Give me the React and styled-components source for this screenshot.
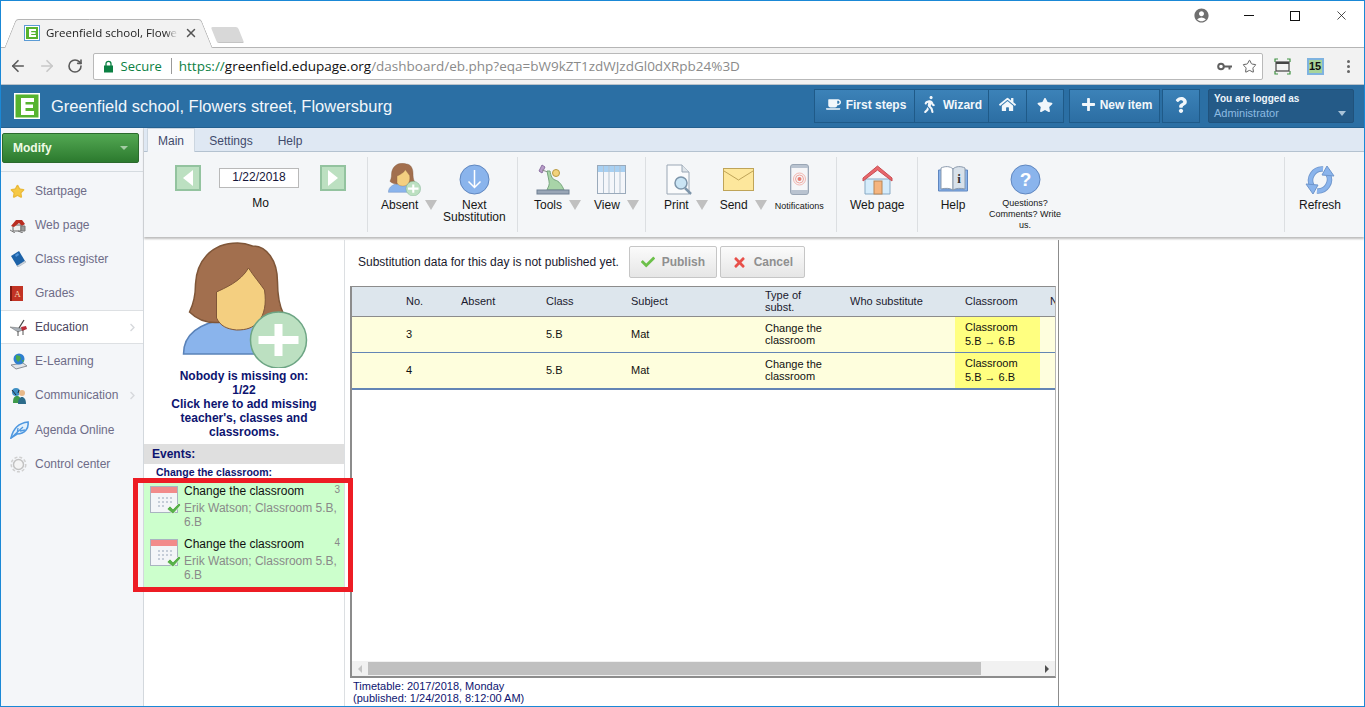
import React from 'react';
import styled, { createGlobalStyle } from 'styled-components';
import { ArrowLeft, ArrowRight, RotateCw, Star, X } from 'lucide-react';
import { FaCoffee, FaWalking, FaHome, FaStar, FaPlus, FaQuestion, FaCheck, FaTimes, FaChevronRight } from 'react-icons/fa';
import { MdAccountCircle } from 'react-icons/md';

const GlobalStyle = createGlobalStyle`
  html, body { margin: 0; padding: 0; background: #fff; overflow: hidden; }
  * { box-sizing: border-box; }
  body { font-family: "Liberation Sans", Arial, sans-serif; }
`;

const Page = styled.div`
  width: 1365px;
  height: 707px;
  border: 1px solid #1a88d6;
  display: flex;
  flex-direction: column;
  overflow: hidden;
  background: #fff;
`;

/* browser chrome */
const TabStrip = styled.div`
  height: 46px;
  flex: none;
  display: flex;
  align-items: flex-start;
  background: #fff;
  padding-left: 15px;
`;
const Tab = styled.div`
  position: relative;
  width: 185px;
  height: 28px;
  margin-top: 18px;
  display: flex;
  align-items: center;
  padding: 0 0 1px 8px;
  font: 11.5px "Open Sans", sans-serif;
  color: #222;
  z-index: 1;
  &::before, &::after {
    content: '';
    position: absolute;
    top: 0;
    bottom: -1px;
    width: 60%;
    background: #f2f2f2;
    border-top: 1px solid #b5b5b5;
    z-index: -1;
  }
  &::before { left: -6px; transform: skewX(-22deg); border-left: 1px solid #b5b5b5; border-radius: 3px 0 0 0; }
  &::after { right: -6px; transform: skewX(22deg); border-right: 1px solid #b5b5b5; border-radius: 0 3px 0 0; }
`;
const TabTitle = styled.span`
  width: 132px;
  margin-left: 6px;
  white-space: nowrap;
  -webkit-mask-image: linear-gradient(to right, #000 90%, transparent);
  mask-image: linear-gradient(to right, #000 90%, transparent);
`;
const TabClose = styled(X)`
  margin-left: 6px;
  color: #555;
`;
const NewTab = styled.div`
  width: 27px;
  height: 16px;
  margin: 26px 0 0 13px;
  background: #d8d8d8;
  border-bottom: 1px solid #c4c4c4;
  border-radius: 2px;
  transform: skewX(22deg);
`;
const WindowControls = styled.div`
  margin-left: auto;
  display: flex;
  align-items: center;
  height: 29px;
`;
const WindowButton = styled.div`
  width: 46px;
  height: 29px;
  display: flex;
  align-items: center;
  justify-content: center;
`;
const ProfileIcon = styled(MdAccountCircle)`
  color: #6f6f6f;
  margin-right: 16px;
`;
const MinLine = styled.span`
  width: 10px;
  height: 1px;
  background: #111;
`;
const MaxBox = styled.span`
  width: 10px;
  height: 10px;
  border: 1px solid #111;
`;

const Toolbar = styled.div`
  height: 38px;
  flex: none;
  display: flex;
  align-items: center;
  background: #f2f2f2;
  border-top: 1px solid #b5b5b5;
  border-bottom: 1px solid #b9c2ca;
  padding: 0 0 0 3px;
`;
const NavButton = styled.div`
  width: 28.5px;
  display: flex;
  justify-content: center;
  color: ${p => p.$off ? '#c8c8c8' : '#5a5a5a'};
`;
const Omnibox = styled.div`
  width: 1170px;
  height: 27px;
  margin-left: 3px;
  display: flex;
  align-items: center;
  background: #fff;
  border: 1px solid #b9b9b9;
  border-radius: 2px;
  padding: 0 5px 0 9px;
  font: 13.5px "Open Sans", sans-serif;
  white-space: nowrap;
`;
const Secure = styled.span`
  color: #0b8043;
  margin-left: 7px;
  font-size: 13px;
`;
const UrlDivider = styled.span`
  width: 1px;
  height: 16px;
  background: #9a9a9a;
  margin: 0 7px 0 9px;
`;
const UrlGreen = styled.span`color: #0b8043;`;
const UrlHost = styled.span`color: #111;`;
const UrlPath = styled.span`color: #8a8a8a;`;
const OmniIcons = styled.div`
  margin-left: auto;
  display: flex;
  align-items: center;
  gap: 10px;
  color: #5f5f5f;
`;
const ExtArea = styled.div`
  flex: 1;
  display: flex;
  align-items: center;
  padding-left: 11px;
`;
const CalBadge = styled.div`
  width: 17px;
  height: 17px;
  margin-left: 16px;
  background: #a8d49a;
  border: 2px solid #7fb3e0;
  font: bold 11px/13px "Liberation Sans", sans-serif;
  text-align: center;
  color: #111;
`;
const MenuDots = styled.div`
  margin-left: 23px;
  display: flex;
  flex-direction: column;
  gap: 2px;
  span { width: 3px; height: 3px; border-radius: 50%; background: #666; }
`;

/* app header */
const AppHeader = styled.header`
  height: 43px;
  flex: none;
  display: flex;
  align-items: center;
  background: #2b6fa4;
  border-bottom: 1px solid #24608f;
  padding: 0 10px 0 13px;
`;
const SchoolName = styled.h1`
  margin: 0 0 0 11px;
  font: normal 16.5px "Liberation Sans", sans-serif;
  color: #f2f7fb;
`;
const HeaderButtons = styled.div`
  margin-left: auto;
  display: flex;
  align-items: stretch;
  height: 34px;
`;
const HeadBtn = styled.div`
  width: ${p => p.$w}px;
  margin-left: ${p => p.$ml || 0}px;
  display: flex;
  align-items: center;
  justify-content: center;
  gap: ${p => p.$gap || 5}px;
  padding-bottom: 3px;
  padding-left: ${p => p.$pl || 0}px;
  background: linear-gradient(#3c82b8, #2c6ea3);
  border: 1px solid #1f5a88;
  margin-right: -1px;
  font: bold 12px "Liberation Sans", sans-serif;
  color: #f2f7fb;
`;
const UserBox = styled.div`
  position: relative;
  width: 146px;
  margin-left: 9px;
  padding: 2px 5px;
  background: #245a87;
  border: 1px solid #20527c;
  border-radius: 2px;
  font: 11px/14px "Liberation Sans", sans-serif;
  color: #8dbbe2;
  b { display: block; color: #eef5fb; font-size: 10px; }
`;
const UserCaret = styled.span`
  position: absolute;
  right: 7px;
  bottom: 6px;
  border: 4px solid transparent;
  border-top: 5px solid #a9c3d8;
  border-bottom: 0;
`;

/* page body */
const Body = styled.div`
  flex: 1;
  display: flex;
  min-height: 0;
`;
const Sidebar = styled.aside`
  width: 143px;
  flex: none;
  background: #f4f6f9;
  border-right: 1px solid #d3d8dd;
  padding-top: 5px;
`;
const ModifyButton = styled.div`
  height: 30px;
  margin: 0 4px 0 1px;
  display: flex;
  align-items: center;
  justify-content: space-between;
  padding: 0 10px 0 10px;
  background: linear-gradient(#53a853, #2c7a2e);
  border: 1px solid #2b6a2d;
  border-radius: 2px;
  font: bold 12px "Liberation Sans", sans-serif;
  color: #eefbe4;
`;
const ModifyCaret = styled.span`
  border: 4px solid transparent;
  border-top: 4px solid #a4cca4;
  border-bottom: 0;
`;
const SideDivider = styled.div`
  height: 1px;
  margin: 8px 0 2px;
  background: #d5dbe0;
`;
const SideItem = styled.div`
  height: 34px;
  margin-top: ${p => p.$push ? 1 : 0}px;
  display: flex;
  align-items: center;
  padding-left: 9px;
  background: ${p => p.$active ? '#fff' : 'transparent'};
  border-top: 1px solid ${p => p.$active ? '#dde0e3' : 'transparent'};
  border-bottom: 1px solid ${p => p.$active ? '#dde0e3' : 'transparent'};
  font: 12px "Liberation Sans", sans-serif;
  color: ${p => p.$active ? '#4b4660' : '#6e6c88'};
`;
const SideIcon = styled.span`
  width: 25px;
  height: 20px;
  flex: none;
  display: flex;
  align-items: center;
`;
const SideChevron = styled(FaChevronRight)`
  margin-left: auto;
  margin-right: 6px;
  color: #d6d8dc;
`;

const MainArea = styled.div`
  flex: 1;
  min-width: 0;
  display: flex;
  flex-direction: column;
`;

/* ribbon */
const Ribbon = styled.div`
  flex: none;
  box-shadow: 0 2px 2px #bdbdbd;
  position: relative;
  z-index: 1;
`;
const RibbonTabs = styled.div`
  height: 24px;
  display: flex;
  padding-left: 3px;
  background: #dfe8f3;
  border-bottom: 1px solid #b4c2d0;
  font: 12px "Liberation Sans", sans-serif;
  color: #3f4a6b;
`;
const RibbonTab = styled.div`
  height: 24px;
  width: ${p => p.$w}px;
  display: flex;
  align-items: center;
  justify-content: center;
  background: ${p => p.$active ? '#f4f6f9' : 'transparent'};
  border: 1px solid ${p => p.$active ? '#ccd6e0' : 'transparent'};
  border-bottom: 0;
`;
const RibbonBody = styled.div`
  height: 85px;
  display: flex;
  padding-top: 5px;
  background: #f4f6f8;
`;
const Group = styled.div`
  height: 75px;
  width: ${p => p.$w ? p.$w + 'px' : 'auto'};
  display: flex;
  align-items: flex-start;
  gap: ${p => p.$gap || 0}px;
  padding-left: ${p => p.$pl || 0}px;
  margin-left: ${p => p.$auto ? 'auto' : 0};
  border-right: ${p => p.$last ? 0 : '1px solid #dcdfe2'};
  border-left: ${p => p.$auto ? '1px solid #dcdfe2' : 0};
`;
const DateGroup = styled(Group)`
  flex-direction: column;
  align-items: stretch;
`;
const DateRow = styled.div`
  display: flex;
  align-items: center;
  margin-top: 8px;
`;
const StepButton = styled.div`
  width: 26px;
  height: 26px;
  display: flex;
  align-items: center;
  justify-content: center;
  background: #bce0c1;
  border: 2px solid #93c39f;
  &::before {
    content: '';
    border: 8px solid transparent;
    border-left: ${p => p.$right ? '10px solid #fff' : 0};
    border-right: ${p => p.$right ? 0 : '10px solid #fff'};
  }
`;
const DateField = styled.div`
  width: 80px;
  height: 20px;
  margin: 0 21px 0 18px;
  background: #fff;
  border: 1px solid #b9b9b9;
  font: 12px/17px "Liberation Sans", sans-serif;
  text-align: center;
  color: #15153a;
`;
const DayName = styled.div`
  width: 171px;
  margin-top: 5px;
  font: 12px/14px "Liberation Sans", sans-serif;
  text-align: center;
  color: #111;
`;
const Tool = styled.div`
  width: ${p => p.$w ? p.$w + 'px' : 'auto'};
  margin-left: ${p => p.$ml || 0}px;
  display: flex;
  flex-direction: column;
  align-items: center;
  padding-top: 6px;
`;
const ToolIcon = styled.div`
  height: 33px;
  display: flex;
  align-items: center;
  justify-content: center;
  margin-right: ${p => p.$menu ? 10 : 0}px;
`;
const ToolLabel = styled.div`
  margin-top: ${p => p.$mt ?? 3}px;
  display: flex;
  align-items: flex-start;
  gap: 7px;
  font: ${p => p.$small ? '9px/11px' : '12px/12px'} "Liberation Sans", sans-serif;
  text-align: center;
  color: #161616;
`;
const MenuCaret = styled.span`
  margin-top: 1px;
  border: 6px solid transparent;
  border-top: 10px solid #c0c0c0;
  border-bottom: 0;
`;

/* content */
const Content = styled.div`
  flex: 1;
  min-height: 0;
  display: flex;
  padding-top: 3px;
`;
const MissingPanel = styled.section`
  width: 201px;
  flex: none;
  border-right: 1px solid #dcdfe2;
  display: flex;
  flex-direction: column;
`;
const MissingInfo = styled.div`
  height: 204px;
  display: flex;
  flex-direction: column;
  align-items: center;
  padding: 2px 20px 0;
  font: bold 12px/14px "Liberation Sans", sans-serif;
  color: #0d1470;
  text-align: center;
  svg { margin-left: 2px; }
  p { margin: 1px 0 0; }
`;
const EventsHead = styled.div`
  height: 20px;
  padding-left: 8px;
  background: #dfdfdf;
  font: bold 12px/20px "Liberation Sans", sans-serif;
  color: #0d1470;
`;
const EventsCaption = styled.div`
  height: 19px;
  padding: 2px 0 0 12px;
  font: bold 10.5px/12px "Liberation Sans", sans-serif;
  color: #0d1470;
`;
const EventList = styled.div`
  position: relative;
  height: 104px;
  background: #ccffcc;
`;
const RedFrame = styled.div`
  position: absolute;
  top: -5px;
  left: -11px;
  right: -9px;
  bottom: -5px;
  border: 5px solid #ed1c24;
  pointer-events: none;
`;
const EventRow = styled.div`
  position: relative;
  height: 53px;
  display: flex;
  padding: 1px 4px 0 6px;
`;
const EventIcon = styled.div`
  width: 34px;
  flex: none;
  padding-top: 2px;
`;
const EventText = styled.div`
  flex: 1;
  font: 12px/14px "Liberation Sans", sans-serif;
  color: #111;
  small { display: block; margin-top: 3px; font-size: 12px; color: #8a8a8a; }
`;
const EventNo = styled.div`
  position: absolute;
  top: 1px;
  right: 4px;
  font: 10px/12px "Liberation Sans", sans-serif;
  color: #888;
`;

const SubPanel = styled.section`
  width: 714px;
  flex: none;
  border-right: 1px solid #8c8c8c;
  padding-left: 5px;
  display: flex;
  flex-direction: column;
`;
const Notice = styled.div`
  height: 46px;
  flex: none;
  display: flex;
  align-items: center;
  padding: 0 0 2px 8px;
  font: 12px "Liberation Sans", sans-serif;
  color: #1a1a2e;
`;
const ActionButton = styled.div`
  width: ${p => p.$w}px;
  height: 32px;
  margin-left: ${p => p.$ml}px;
  display: flex;
  align-items: center;
  justify-content: center;
  gap: 7px;
  background: linear-gradient(#fbfbfb, #e6e6e6);
  border: 1px solid #c6c6c6;
  border-radius: 2px;
  font: bold 12px "Liberation Sans", sans-serif;
  color: #8f8f8f;
`;
const Frame = styled.div`
  width: 706px;
  height: 392px;
  flex: none;
  display: flex;
  flex-direction: column;
  border-top: 1px solid #8c8c8c;
  border-bottom: 2px solid #8c8c8c;
  border-left: 2px solid #8c8c8c;
  border-right: 1px solid #b5b5b5;
`;
const GridWrap = styled.div`
  flex: 1;
  overflow: hidden;
`;
const columns = '44px 55px 85px 85px 134px 85px 115px 85px 20px';
const HeadRow = styled.div`
  height: 30px;
  display: grid;
  grid-template-columns: ${columns};
  align-items: center;
  background: #dde6ed;
  border-bottom: 1px solid #8c8c8c;
  font: 11px/12px "Liberation Sans", sans-serif;
  color: #1a1a2e;
`;
const Row = styled.div`
  height: ${p => p.$h}px;
  display: grid;
  grid-template-columns: ${columns};
  align-items: center;
  background: #fefedd;
  border-bottom: ${p => p.$last ? '2px solid #6385b5' : '1px solid #6385b5'};
  font: 11px/12px "Liberation Sans", sans-serif;
  color: #111;
`;
const Cell = styled.div`
  padding: 0 0 2px 10px;
  overflow: hidden;
  white-space: ${p => p.$clip ? 'nowrap' : 'normal'};
`;
const ChangeCell = styled(Cell)`
  align-self: stretch;
  display: flex;
  flex-direction: column;
  justify-content: center;
  background: #ffff80;
  line-height: 14px;
`;
const Scrollbar = styled.div`
  height: 15px;
  flex: none;
  display: flex;
  align-items: center;
  background: #f1f1f1;
`;
const ScrollArrow = styled.span`
  width: 16px;
  display: flex;
  justify-content: center;
  &::before {
    content: '';
    border: 4px solid transparent;
    border-left: ${p => p.$right ? '4px solid #505050' : 0};
    border-right: ${p => p.$right ? 0 : '4px solid #c4c4c4'};
  }
`;
const ScrollThumb = styled.div`
  width: 613px;
  height: 13px;
  background: #c0c0c0;
`;
const ScrollRest = styled.div`flex: 1;`;
const Published = styled.div`
  padding: 2px 0 0 3px;
  font: 11px/12px "Liberation Sans", sans-serif;
  color: #0d1470;
`;

/* drawings */
const Logo = ({ size }) => (
  <svg width={size} height={size} viewBox="0 0 26 26">
    <rect width="26" height="26" fill="#fff" />
    <rect x="1.500" y="1.500" width="23" height="23" fill="#56b32f" />
    <path d="M7 5h13v4h-8.500v2.500H19v3.500h-7.500V18H20v4H7z" fill="#fff" />
  </svg>
);
const Favicon = () => (
  <svg width="16" height="16" viewBox="0 0 16 16">
    <rect x="0.500" y="0.500" width="15" height="15" fill="#fff" stroke="#5b9bd5" />
    <rect x="2" y="2" width="12" height="12" fill="#56b32f" />
    <path d="M5 4h7v2H7.200v1.200H11.500v1.800H7.200v1.100H12v2H5z" fill="#fff" />
  </svg>
);
const Padlock = () => (
  <svg width="11" height="13" viewBox="0 0 11 13">
    <path d="M3 6V3.800a2.500 2.500 0 0 1 5 0V6" fill="none" stroke="#0b8043" strokeWidth="1.300" />
    <rect x="1" y="5.500" width="9" height="7" fill="#0b8043" />
  </svg>
);
const KeyIcon = () => (
  <svg width="15" height="9" viewBox="0 0 15 9">
    <circle cx="4" cy="4.500" r="2.800" fill="none" stroke="#5f5f5f" strokeWidth="2" />
    <path d="M7 3.500h8v2h-1.500v2h-2v-2H7z" fill="#5f5f5f" />
  </svg>
);
const CastFrame = () => (
  <svg width="17" height="17" viewBox="0 0 17 17">
    <path d="M1 4V1h3M13 1h3v3M1 13v3h3M13 16h3v-3" fill="none" stroke="#3f9142" strokeWidth="1.200" />
    <rect x="2" y="4" width="13" height="9" fill="none" stroke="#444" strokeWidth="1.200" />
    <rect x="2" y="4" width="13" height="2" fill="#444" />
  </svg>
);
const PersonAdd = ({ size }) => (
  <svg width={size} height={size} viewBox="0 0 125 126">
    <path d="M1 112c0-24 22-32 44-35h22c14 2 26 6 32 12v23z" fill="#8ab4ec" stroke="#5a82b8" strokeWidth="1.500" />
    <path d="M40 66h30v12c-2 9-28 9-30 0z" fill="#dcb36f" stroke="#a98648" strokeWidth="1" />
    <path d="M55 1C28 1 14 20 13 42c0 14-3 22-6 28 8 8 20 12 33 10h30c12 2 24-2 31-8-5-10-6-20-6-32C95 18 84 4 70 4c-5-2-10-3-15-3z" fill="#a26f4e" stroke="#7f5638" strokeWidth="1.500" />
    <path d="M34 50c8-4 24-10 32-24 5 8 12 16 16 22 2 14 0 24-6 32-6 6-12 8-22 8-10-1-16-4-20-12z" fill="#f4cf80" stroke="#7f5638" strokeWidth="1" />
    <circle cx="96" cy="98" r="28" fill="#bce0c1" stroke="#6da584" strokeWidth="1.500" />
    <path d="M92 82h8v12h16v8h-16v12h-8v-12H76v-8h16z" fill="#fff" />
  </svg>
);
const CircleGlyph = ({ children }) => (
  <svg width="31" height="31" viewBox="0 0 31 31">
    <circle cx="15.500" cy="15.500" r="14.500" fill="#8ab4ec" stroke="#5f86bf" />
    {children}
  </svg>
);
const ToolsIcon = () => (
  <svg width="34" height="32" viewBox="0 0 34 32">
    <path d="M3 7l3-6 3 2-3 6z" fill="#b79ac8" stroke="#8d72a2" />
    <path d="M6 6l6 2 1-1" fill="none" stroke="#8a8a8a" />
    <circle cx="20" cy="9" r="3.500" fill="#f2d27c" stroke="#b89a45" />
    <path d="M11 7h3c1 5 2 8 5 9 4 1 7 5 9 10H11c1-3 3-5 2-9z" fill="#a8d4a8" stroke="#76a67d" />
    <rect x="1" y="26" width="32" height="4" fill="#99a6b6" stroke="#6e7f92" />
  </svg>
);
const ViewIcon = () => (
  <svg width="29" height="29" viewBox="0 0 29 29">
    <rect x="0.500" y="0.500" width="28" height="28" fill="#f4f6fa" stroke="#9aaabb" />
    <rect x="1" y="1" width="27" height="6" fill="#a8d0f2" />
    <path d="M6.500 1v27M12 1v27M17.500 1v27M23 1v27" stroke="#b5c3d0" />
  </svg>
);
const PrintIcon = () => (
  <svg width="29" height="32" viewBox="0 0 29 32">
    <path d="M1 1h15l7 7v22H1z" fill="#fafbfc" stroke="#9aa7b5" />
    <path d="M16 1v7h7" fill="#dfe5ea" stroke="#9aa7b5" />
    <circle cx="15" cy="19" r="6" fill="#c9e4f4" stroke="#7d95aa" strokeWidth="1.500" />
    <path d="M19 24l6 6" stroke="#7d95aa" strokeWidth="2.500" />
  </svg>
);
const MailIcon = () => (
  <svg width="31" height="23" viewBox="0 0 31 23">
    <rect x="0.500" y="0.500" width="30" height="22" fill="#fde79c" stroke="#bfa458" />
    <path d="M1 3l14.500 9L30 3" fill="none" stroke="#bfa458" />
  </svg>
);
const PhoneIcon = () => (
  <svg width="19" height="31" viewBox="0 0 19 31">
    <rect x="0.500" y="0.500" width="18" height="30" rx="2.500" fill="#b9c3d0" stroke="#9aa6b5" />
    <rect x="1.500" y="4" width="16" height="22" fill="#f6f6f8" />
    <circle cx="9.500" cy="15" r="6" fill="none" stroke="#f2b6b0" />
    <circle cx="9.500" cy="15" r="4" fill="none" stroke="#eda49c" />
    <circle cx="9.500" cy="15" r="2" fill="#e57e74" />
  </svg>
);
const HouseIcon = () => (
  <svg width="31" height="31" viewBox="0 0 31 31">
    <path d="M3 15h25v15H3z" fill="#d5ecfb" stroke="#87a9c4" />
    <path d="M1 14L15.500 2 30 14v3L15.500 6 1 17z" fill="#e8676b" stroke="#c94d52" />
    <rect x="12" y="17" width="8" height="13" fill="#f5b57f" stroke="#b88656" />
  </svg>
);
const BookIcon = () => (
  <svg width="30" height="29" viewBox="0 0 30 29">
    <path d="M0.500 5v21h29V5h-3v19H3.500V5z" fill="#8ab4ec" stroke="#5f86bf" />
    <path d="M3 3c4-2 9-2 12 1v21c-3-2-8-2-12-1z" fill="#fff" stroke="#8b9aad" />
    <path d="M15 4c3-3 8-3 12-1v21c-4-1-9-1-12 1z" fill="#d8e1ea" stroke="#8b9aad" />
    <text x="21" y="18" fontSize="13" fontWeight="bold" fontFamily="Liberation Serif, serif" textAnchor="middle" fill="#333">i</text>
  </svg>
);
const arcA = 'M19 5A11.500 11.500 0 0 0 8 22';
const arcB = 'M13 27A11.500 11.500 0 0 0 24 10';
const RefreshIcon = () => (
  <svg width="32" height="32" viewBox="0 0 32 32">
    <path d={arcA} fill="none" stroke="#6f96cc" strokeWidth="5.500" />
    <path d={arcB} fill="none" stroke="#6f96cc" strokeWidth="5.500" />
    <path d={arcA} fill="none" stroke="#8ab4ec" strokeWidth="3.800" />
    <path d={arcB} fill="none" stroke="#8ab4ec" strokeWidth="3.800" />
    <path d="M2 20l12 1-5 9z" fill="#8ab4ec" stroke="#6f96cc" />
    <path d="M30 12l-12-1 5-9z" fill="#8ab4ec" stroke="#6f96cc" />
  </svg>
);
const CalendarDone = () => (
  <svg width="31" height="31" viewBox="0 0 31 31">
    <rect x="0.500" y="0.500" width="27" height="26" fill="#f3f5f8" stroke="#a9b4c0" />
    <rect x="1" y="1" width="26" height="6" fill="#f28b8b" />
    <path d="M8 11h2v2H8zM12 11h2v2h-2zM16 11h2v2h-2zM20 11h2v2h-2zM8 15h2v2H8zM12 15h2v2h-2zM16 15h2v2h-2zM20 15h2v2h-2zM8 19h2v2H8zM12 19h2v2h-2z" fill="#c5cdd8" />
    <path d="M17 23l3-3 3 3 6-6 2 2-8 9z" fill="#58b04a" stroke="#fff" strokeWidth="0.600" />
  </svg>
);

const sideIcons = {
  star: <Star size={15} fill="#f6c945" color="#eab93a" />,
  web: (
    <svg width="16" height="15" viewBox="0 0 16 15">
      <path d="M3 7h8v6H3z" fill="#eee" stroke="#666" />
      <path d="M1 8l5-6h6l3 4-3 2-3-3-5 4z" fill="#b92d22" />
      <path d="M11 8h4v5h-4zM0 12l5 3M8 13l5 2" fill="#999" stroke="#777" />
    </svg>
  ),
  book: (
    <svg width="16" height="16" viewBox="0 0 16 16">
      <path d="M1 5l8-5 6 10-8 5z" fill="#1c62a8" />
      <path d="M7 15l8-5 1 1-8 5z" fill="#dce3ea" stroke="#8a98a8" strokeWidth="0.500" />
      <path d="M5 4l3-2 1 2-3 2z" fill="#4f93d8" />
    </svg>
  ),
  grades: (
    <svg width="13" height="15" viewBox="0 0 13 15">
      <rect width="13" height="15" fill="#c23324" />
      <rect width="2" height="15" fill="#7c1a12" />
      <text x="7.500" y="11" fontSize="9" fontFamily="Liberation Serif, serif" textAnchor="middle" fill="#f7d8b0">A</text>
    </svg>
  ),
  edu: (
    <svg width="18" height="17" viewBox="0 0 18 17">
      <path d="M0 8l10 1 5 1-7 3z" fill="#aab2ba" stroke="#666" strokeWidth="0.500" />
      <path d="M9 9l5-8" stroke="#444" strokeWidth="1.200" />
      <path d="M11 8l5-1 1 3-5 2z" fill="#b92d3a" />
      <path d="M8 12v5M13 11v5" stroke="#555" />
    </svg>
  ),
  globe: (
    <svg width="18" height="17" viewBox="0 0 18 17">
      <path d="M1 12l12-2 4 3-11 3z" fill="#e2e5e9" stroke="#8a9098" />
      <circle cx="9" cy="6" r="5.500" fill="#2e7fd0" />
      <path d="M6 2l4 1 1 3-3 3-2-3zM12 7h2l-1 3z" fill="#4aa84a" />
    </svg>
  ),
  people: (
    <svg width="17" height="17" viewBox="0 0 17 17">
      <circle cx="6" cy="5" r="4" fill="#3f8fc4" />
      <path d="M3 16c0-5 1-7 4-7s4 2 4 7z" fill="#3f9a4a" />
      <circle cx="12" cy="6" r="3" fill="#e8b98a" />
      <path d="M2 3l4 5M9 3l-1 3" stroke="#1f2a3a" />
      <path d="M8 17c0-5 2-7 4-7s4 2 4 7z" fill="#2c6b8a" />
    </svg>
  ),
  feather: (
    <svg width="20" height="18" viewBox="0 0 20 18">
      <path d="M1 17C3 8 9 2 18 1c1 6-3 12-11 12z" fill="#e3f0fb" stroke="#4f98e0" strokeWidth="1.600" />
      <path d="M1 17L13 6M7 13l1-6M10 10l5-1" stroke="#4f98e0" strokeWidth="1.300" fill="none" />
    </svg>
  ),
  gear: (
    <svg width="17" height="17" viewBox="0 0 17 17">
      <circle cx="8.500" cy="8.500" r="5" fill="#f4f4f4" stroke="#c2c2c2" strokeWidth="1.500" />
      <circle cx="8.500" cy="8.500" r="7.300" fill="none" stroke="#cfcfcf" strokeWidth="1.500" strokeDasharray="3 2" />
    </svg>
  ),
};

const sideItems = [
  { id: 'star', label: 'Startpage' },
  { id: 'web', label: 'Web page' },
  { id: 'book', label: 'Class register' },
  { id: 'grades', label: 'Grades' },
  { id: 'edu', label: 'Education', active: true, more: true },
  { id: 'globe', label: 'E-Learning' },
  { id: 'people', label: 'Communication', more: true },
  { id: 'feather', label: 'Agenda Online', push: true },
  { id: 'gear', label: 'Control center' },
];

const rows = [{ no: '3', h: 36 }, { no: '4', h: 37, last: true }];

export default function App() {
  return (
    <Page>
      <GlobalStyle />
      <TabStrip>
        <Tab>
          <Favicon />
          <TabTitle>Greenfield school, Flower</TabTitle>
          <TabClose size={14} strokeWidth={2.5} />
        </Tab>
        <NewTab />
        <WindowControls>
          <ProfileIcon size={17} />
          <WindowButton><MinLine /></WindowButton>
          <WindowButton><MaxBox /></WindowButton>
          <WindowButton><X size={15} strokeWidth={1.2} color="#111" /></WindowButton>
        </WindowControls>
      </TabStrip>

      <Toolbar>
        <NavButton><ArrowLeft size={18} strokeWidth={2.2} /></NavButton>
        <NavButton $off><ArrowRight size={18} strokeWidth={2.2} /></NavButton>
        <NavButton><RotateCw size={16} strokeWidth={2.4} /></NavButton>
        <Omnibox>
          <Padlock />
          <Secure>Secure</Secure>
          <UrlDivider />
          <UrlGreen>https://</UrlGreen>
          <UrlHost>greenfield.edupage.org</UrlHost>
          <UrlPath>/dashboard/eb.php?eqa=bW9kZT1zdWJzdGl0dXRpb24%3D</UrlPath>
          <OmniIcons>
            <KeyIcon />
            <Star size={15} strokeWidth={1.6} />
          </OmniIcons>
        </Omnibox>
        <ExtArea>
          <CastFrame />
          <CalBadge>15</CalBadge>
          <MenuDots><span /><span /><span /></MenuDots>
        </ExtArea>
      </Toolbar>

      <AppHeader>
        <Logo size={26} />
        <SchoolName>Greenfield school, Flowers street, Flowersburg</SchoolName>
        <HeaderButtons>
          <HeadBtn $w={101} $pl={3}><FaCoffee size={15} />First steps</HeadBtn>
          <HeadBtn $w={75}><FaWalking size={17} />Wizard</HeadBtn>
          <HeadBtn $w={39}><FaHome size={17} /></HeadBtn>
          <HeadBtn $w={38}><FaStar size={16} /></HeadBtn>
          <HeadBtn $w={91} $ml={6} $pl={4} $gap={4}><FaPlus size={15} />New item</HeadBtn>
          <HeadBtn $w={38} $ml={3}><FaQuestion size={16} /></HeadBtn>
          <UserBox>
            <b>You are logged as</b>
            Administrator
            <UserCaret />
          </UserBox>
        </HeaderButtons>
      </AppHeader>

      <Body>
        <Sidebar>
          <ModifyButton>Modify<ModifyCaret /></ModifyButton>
          <SideDivider />
          {sideItems.map(item => (
            <SideItem key={item.id} $active={item.active} $push={item.push}>
              <SideIcon>{sideIcons[item.id]}</SideIcon>
              {item.label}
              {item.more && <SideChevron size={9} />}
            </SideItem>
          ))}
        </Sidebar>

        <MainArea>
          <Ribbon>
            <RibbonTabs>
              <RibbonTab $w={48} $active>Main</RibbonTab>
              <RibbonTab $w={72}>Settings</RibbonTab>
              <RibbonTab $w={46}>Help</RibbonTab>
            </RibbonTabs>
            <RibbonBody>
              <DateGroup $w={224} $pl={31}>
                <DateRow>
                  <StepButton />
                  <DateField>1/22/2018</DateField>
                  <StepButton $right />
                </DateRow>
                <DayName>Mo</DayName>
              </DateGroup>
              <Group $w={150} $pl={13} $gap={2}>
                <Tool>
                  <ToolIcon $menu><PersonAdd size={33} /></ToolIcon>
                  <ToolLabel>Absent<MenuCaret /></ToolLabel>
                </Tool>
                <Tool $w={70}>
                  <ToolIcon><CircleGlyph><path d="M15.500 6v17M9.500 17.500l6 6 6-6" fill="none" stroke="#fff" strokeWidth="1.500" /></CircleGlyph></ToolIcon>
                  <ToolLabel>Next<br />Substitution</ToolLabel>
                </Tool>
              </Group>
              <Group $w={128} $pl={16} $gap={13}>
                <Tool>
                  <ToolIcon $menu><ToolsIcon /></ToolIcon>
                  <ToolLabel>Tools<MenuCaret /></ToolLabel>
                </Tool>
                <Tool>
                  <ToolIcon $menu><ViewIcon /></ToolIcon>
                  <ToolLabel>View<MenuCaret /></ToolLabel>
                </Tool>
              </Group>
              <Group $w={191} $pl={18} $gap={12}>
                <Tool>
                  <ToolIcon $menu><PrintIcon /></ToolIcon>
                  <ToolLabel>Print<MenuCaret /></ToolLabel>
                </Tool>
                <Tool>
                  <ToolIcon $menu><MailIcon /></ToolIcon>
                  <ToolLabel>Send<MenuCaret /></ToolLabel>
                </Tool>
                <Tool $ml={-4}>
                  <ToolIcon><PhoneIcon /></ToolIcon>
                  <ToolLabel $small $mt={5}>Notifications</ToolLabel>
                </Tool>
              </Group>
              <Group $w={81} $pl={13}>
                <Tool>
                  <ToolIcon><HouseIcon /></ToolIcon>
                  <ToolLabel>Web page</ToolLabel>
                </Tool>
              </Group>
              <Group $pl={20} $gap={19} $last>
                <Tool>
                  <ToolIcon><BookIcon /></ToolIcon>
                  <ToolLabel>Help</ToolLabel>
                </Tool>
                <Tool $w={76}>
                  <ToolIcon><CircleGlyph><text x="15.500" y="22" fontSize="19" fontWeight="bold" fontFamily="Liberation Sans, sans-serif" textAnchor="middle" fill="#fff">?</text></CircleGlyph></ToolIcon>
                  <ToolLabel $small $mt={2}>Questions? Comments? Write us.</ToolLabel>
                </Tool>
              </Group>
              <Group $w={80} $auto $last>
                <Tool $w={70}>
                  <ToolIcon><RefreshIcon /></ToolIcon>
                  <ToolLabel>Refresh</ToolLabel>
                </Tool>
              </Group>
            </RibbonBody>
          </Ribbon>

          <Content>
            <MissingPanel>
              <MissingInfo>
                <PersonAdd size={126} />
                <p>Nobody is missing on:<br />1/22<br />Click here to add missing teacher's, classes and classrooms.</p>
              </MissingInfo>
              <EventsHead>Events:</EventsHead>
              <EventsCaption>Change the classroom:</EventsCaption>
              <EventList>
                {['3', '4'].map(no => (
                  <EventRow key={no}>
                    <EventIcon><CalendarDone /></EventIcon>
                    <EventText>
                      Change the classroom
                      <small>Erik Watson; Classroom 5.B, 6.B</small>
                    </EventText>
                    <EventNo>{no}</EventNo>
                  </EventRow>
                ))}
                <RedFrame />
              </EventList>
            </MissingPanel>

            <SubPanel>
              <Notice>
                Substitution data for this day is not published yet.
                <ActionButton $w={88} $ml={10}><FaCheck size={14} color="#6cc04a" />Publish</ActionButton>
                <ActionButton $w={85} $ml={3}><FaTimes size={15} color="#e8504a" />Cancel</ActionButton>
              </Notice>
              <Frame>
                <GridWrap>
                  <HeadRow>
                    <span />
                    <Cell>No.</Cell>
                    <Cell>Absent</Cell>
                    <Cell>Class</Cell>
                    <Cell>Subject</Cell>
                    <Cell>Type of<br />subst.</Cell>
                    <Cell>Who substitute</Cell>
                    <Cell>Classroom</Cell>
                    <Cell $clip>N</Cell>
                  </HeadRow>
                  {rows.map(r => (
                    <Row key={r.no} $h={r.h} $last={r.last}>
                      <span />
                      <Cell>{r.no}</Cell>
                      <Cell />
                      <Cell>5.B</Cell>
                      <Cell>Mat</Cell>
                      <Cell>Change the classroom</Cell>
                      <Cell />
                      <ChangeCell>
                        <span>Classroom</span>
                        <span>5.B → 6.B</span>
                      </ChangeCell>
                      <Cell />
                    </Row>
                  ))}
                </GridWrap>
                <Scrollbar>
                  <ScrollArrow />
                  <ScrollThumb />
                  <ScrollRest />
                  <ScrollArrow $right />
                </Scrollbar>
              </Frame>
              <Published>Timetable: 2017/2018, Monday<br />(published: 1/24/2018, 8:12:00 AM)</Published>
            </SubPanel>
          </Content>
        </MainArea>
      </Body>
    </Page>
  );
}
